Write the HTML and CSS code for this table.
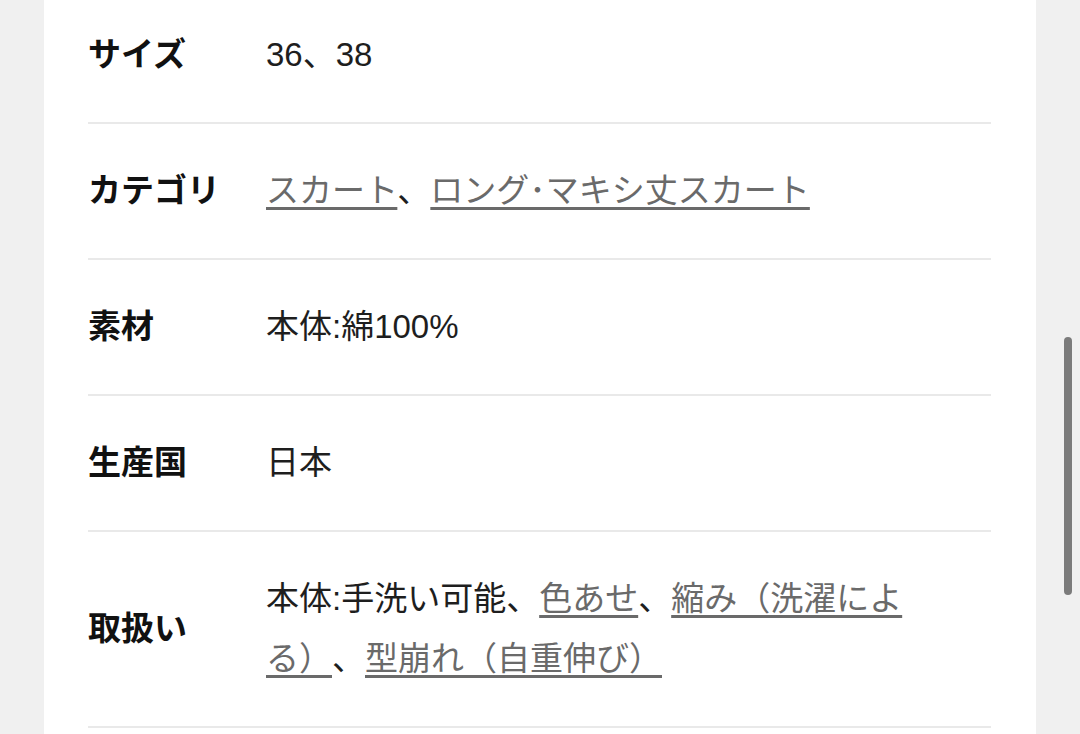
FILE: index.html
```html
<!DOCTYPE html>
<html lang="ja">
<head>
    <meta charset="utf-8">
    <meta name="viewport" content="width=device-width, initial-scale=1">
    <title>商品詳細</title>
    <link rel="stylesheet" href="styles.css">
</head>
<body>

<div class="page">
    <div class="spec-card">
        <dl class="spec-list">
            <div class="spec-row">
                <dt>サイズ</dt>
                <dd>36、38</dd>
            </div>
            <div class="spec-row">
                <dt>カテゴリ</dt>
                <dd><a href="#">スカート</a>、<a href="#">ロング･マキシ丈スカート</a></dd>
            </div>
            <div class="spec-row">
                <dt>素材</dt>
                <dd>本体:綿100%</dd>
            </div>
            <div class="spec-row">
                <dt>生産国</dt>
                <dd>日本</dd>
            </div>
            <div class="spec-row">
                <dt>取扱い</dt>
                <dd>本体:手洗い可能、<a href="#">色あせ</a>、<a href="#">縮み（洗濯による）</a>、<a href="#">型崩れ（自重伸び）</a></dd>
            </div>
        </dl>
    </div>
</div>

<div class="scroll-thumb"></div>

</body>
</html>
```

FILE: styles.css
```css
body {
    margin: 0;
    padding: 0;
    background-color: #f0f0f0;
    font-family: "Liberation Sans", "Noto Sans CJK JP", sans-serif;
    color: #1a1a1a;
    height: 734px;
    overflow: hidden;
}

.page {
    padding: 0 44px;
}

.spec-card {
    background-color: #fff;
    padding: 0 45px 0 44px;
    margin-top: -12px; /* page is scrolled a little */
    min-height: 760px;
}

.spec-list {
    margin: 0;
}

.spec-row {
    display: flex;
    align-items: center;
    padding: 37px 0;
    border-bottom: 2px solid #e9e9e9;
}

.spec-row dt {
    width: 178px;
    flex-shrink: 0;
    font-size: 33px;
    font-weight: bold;
    line-height: 60px;
    color: #111;
}

.spec-row dd {
    margin: 0;
    width: 650px;
    font-size: 33px;
    line-height: 60px;
    color: #1e1e1e;
    text-spacing-trim: space-all; /* keep full width brackets */
}

.spec-row a {
    color: #6a6a6a;
    text-decoration: underline;
    text-decoration-thickness: 3px;
    text-underline-offset: 5px;
    text-decoration-color: #6a6a6a;
}

.scroll-thumb {
    position: fixed;
    top: 337px;
    right: 8px;
    width: 8px;
    height: 258px;
    border-radius: 4px;
    background-color: #7b7b7b;
}
```
